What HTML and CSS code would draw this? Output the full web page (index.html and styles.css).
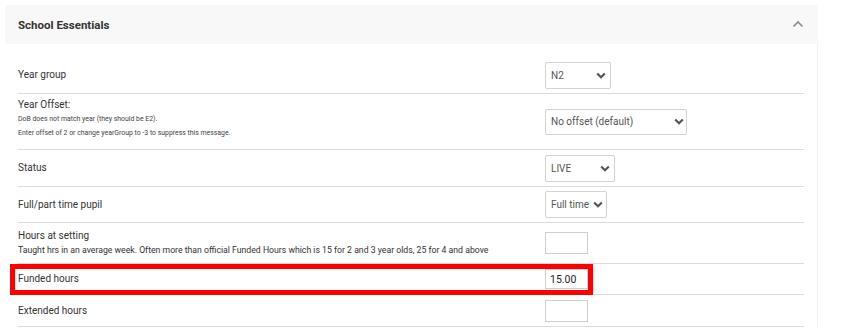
FILE: index.html
```html
<!DOCTYPE html>
<html>
<head>
<meta charset="utf-8">
<link rel="stylesheet" href="styles.css">
</head>
<body>
<div class="panel">
  <div class="panel-header">
    <span class="panel-title">School Essentials</span>
    <svg class="collapse" width="12" height="8" viewBox="0 0 12 8"><polyline points="1.5,6.5 6,2 10.5,6.5" fill="none" stroke="#8a8a8a" stroke-width="1.6"/></svg>
  </div>
  <div class="panel-body">
    <div class="row row-1">
      <div class="label"><div class="title">Year group</div></div>
      <div class="control"><div class="select w-n2"><span>N2</span><svg class="chev" width="10" height="7" viewBox="0 0 10 7"><polyline points="1.2,1.5 5,5.2 8.8,1.5" fill="none" stroke="#555" stroke-width="2.2"/></svg></div></div>
    </div>
    <div class="row row-2">
      <div class="label label-top">
        <div class="title">Year Offset:</div>
        <div class="tiny">DoB does not match year (they should be E2).</div>
        <div class="tiny">Enter offset of 2 or change yearGroup to -3 to suppress this message.</div>
      </div>
      <div class="control"><div class="select w-offset"><span>No offset (default)</span><svg class="chev" width="10" height="7" viewBox="0 0 10 7"><polyline points="1.2,1.5 5,5.2 8.8,1.5" fill="none" stroke="#555" stroke-width="2.2"/></svg></div></div>
    </div>
    <div class="row row-3">
      <div class="label"><div class="title">Status</div></div>
      <div class="control"><div class="select w-live"><span>LIVE</span><svg class="chev" width="10" height="7" viewBox="0 0 10 7"><polyline points="1.2,1.5 5,5.2 8.8,1.5" fill="none" stroke="#555" stroke-width="2.2"/></svg></div></div>
    </div>
    <div class="row row-4">
      <div class="label"><div class="title">Full/part time pupil</div></div>
      <div class="control"><div class="select w-full"><span>Full time</span><svg class="chev" width="10" height="7" viewBox="0 0 10 7"><polyline points="1.2,1.5 5,5.2 8.8,1.5" fill="none" stroke="#555" stroke-width="2.2"/></svg></div></div>
    </div>
    <div class="row row-5">
      <div class="label">
        <div class="title">Hours at setting</div>
        <div class="hint">Taught hrs in an average week. Often more than official Funded Hours which is 15 for 2 and 3 year olds, 25 for 4 and above</div>
      </div>
      <div class="control"><div class="input"></div></div>
    </div>
    <div class="row row-6">
      <div class="highlight"></div>
      <div class="label"><div class="title">Funded hours</div></div>
      <div class="control"><div class="input input-short">15.00</div></div>
    </div>
    <div class="row row-7">
      <div class="label"><div class="title">Extended hours</div></div>
      <div class="control"><div class="input"></div></div>
    </div>
  </div>
</div>
</body>
</html>
```
FILE: styles.css
```css
html, body {
  margin: 0;
  padding: 0;
  background: #ffffff;
}
body {
  font-family: Roboto, "Liberation Sans", Arial, sans-serif;
  color: #333;
  overflow: hidden;
}
.panel {
  margin: 5px 0 0 5px;
  width: 813px;
}
.panel-header {
  height: 39px;
  background: #f8f8f8;
  display: flex;
  align-items: center;
  justify-content: space-between;
  padding: 0 14px 0 13px;
  box-sizing: border-box;
}
.panel-title {
  font-weight: 700;
  font-size: 11.5px;
  color: #333;
}
.collapse {
  display: block;
  margin-top: -2px;
}
.panel-body {
  padding: 13px 13px 0 13px;
  border-right: 1px solid #f2f2f2;
}
.row {
  position: relative;
  display: flex;
  align-items: center;
  border-bottom: 1px solid #dcdcdc;
  box-sizing: border-box;
}
.row-1 { height: 37px; }
.row-2 { height: 56px; }
.row-3 { height: 37px; }
.row-4 { height: 36px; }
.row-5 { height: 41px; }
.row-6 { height: 31px; }
.row-7 { height: 32px; }
.label {
  width: 527px;
  flex: none;
}
.label-top {
  align-self: flex-start;
  padding-top: 4px;
}
.title {
  font-size: 10px;
  line-height: 14px;
  color: #333;
}
.tiny {
  font-size: 6.9px;
  line-height: 14px;
  color: #444;
}
.hint {
  font-size: 8.7px;
  line-height: 14px;
  color: #333;
  white-space: nowrap;
}
.control {
  display: flex;
  align-items: center;
}
.select {
  display: flex;
  align-items: center;
  justify-content: space-between;
  box-sizing: border-box;
  border: 1px solid #d3d3d3;
  border-radius: 2px;
  padding: 0 4px 0 5px;
  font-size: 10px;
  color: #555;
  background: #fff;
}
.chev { display: block; }
.w-n2 { width: 66px; height: 27px; }
.w-offset { width: 142px; height: 26px; padding-right: 2px; }
.w-live { width: 70px; height: 27px; }
.w-full { width: 62px; height: 27px; padding-right: 3px; }
.input {
  width: 43px;
  height: 22px;
  box-sizing: border-box;
  border: 1px solid #cfcfcf;
  background: #fff;
  font-size: 10.5px;
  color: #222;
  display: flex;
  align-items: center;
  padding-left: 4px;
}
.input-short { height: 20px; }
.highlight {
  position: absolute;
  left: -8px;
  top: 0;
  bottom: -1px;
  width: 583px;
  border: 5px solid #ff0000;
  box-sizing: border-box;
  pointer-events: none;
}
```
